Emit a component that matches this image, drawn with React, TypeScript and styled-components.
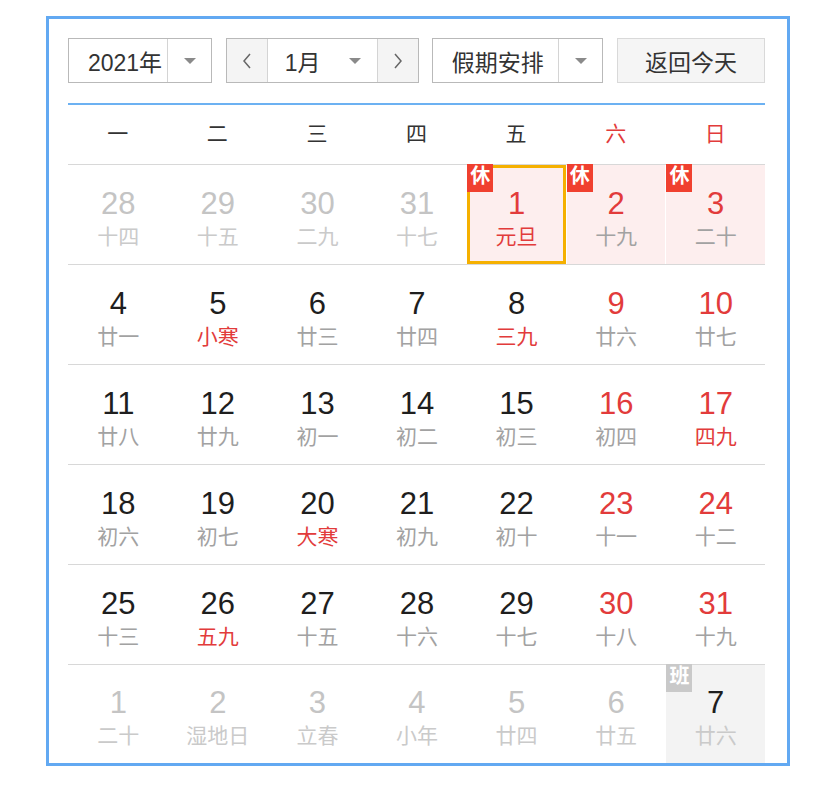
import styled, { createGlobalStyle } from 'styled-components';

const GlobalStyle = createGlobalStyle`
    body {
        margin: 0;
        background: #fff;
        font-family: "Liberation Sans", "Noto Sans CJK SC", sans-serif;
    }
`

const RED = '#e23b3b'

const Frame = styled.div`
    margin: 16px 0 0 46px;
    width: 744px;
    height: 750px;
    box-sizing: border-box;
    border: 3px solid #62a9f2;
    padding: 19px 22px 0 19px;
    display: flex;
    flex-direction: column;
`

const Toolbar = styled.div`
    display: flex;
    justify-content: space-between;
    height: 45px;
    padding-bottom: 20px;
    border-bottom: 2px solid #6cb1f2;
`

const Select = styled.div<{ $width: number }>`
    display: flex;
    width: ${(p) => p.$width}px;
    height: 45px;
    box-sizing: border-box;
    border: 1px solid #b9b9b9;
    background: #fff;
    color: #333;
    font-size: 23px;
`

const SelectText = styled.div<{ $pad?: number }>`
    flex: 1;
    display: flex;
    align-items: center;
    justify-content: center;
    padding-left: ${(p) => p.$pad ?? 4}px;
`

const ArrowBox = styled.div<{ $divider?: boolean }>`
    width: 43px;
    display: flex;
    align-items: center;
    justify-content: center;
    border-left: ${(p) => (p.$divider ? '1px solid #d4d4d4' : 'none')};
`

const Triangle = styled.span`
    width: 0;
    height: 0;
    border-left: 6px solid transparent;
    border-right: 6px solid transparent;
    border-top: 6px solid #8a8a8a;
`

const NavButton = styled.div<{ $side: 'left' | 'right' }>`
    width: 40px;
    display: flex;
    align-items: center;
    justify-content: center;
    background: #f4f4f4;
    border-${(p) => (p.$side === 'left' ? 'right' : 'left')}: 1px solid #d4d4d4;
`

const MonthText = styled.div`
    flex: 1;
    display: flex;
    align-items: center;
    padding-left: 17px;
`

const TodayButton = styled.div`
    width: 148px;
    height: 45px;
    box-sizing: border-box;
    border: 1px solid #d9d9d9;
    background: #f5f5f5;
    color: #333;
    font-size: 23px;
    display: flex;
    align-items: center;
    justify-content: center;
`

const WeekHeader = styled.div`
    display: grid;
    grid-template-columns: repeat(7, 1fr);
    height: 59px;
    border-bottom: 1px solid #d8d8d8;
`

const WeekDay = styled.div<{ $red?: boolean }>`
    display: flex;
    align-items: center;
    justify-content: center;
    padding-bottom: 5px;
    font-size: 21px;
    color: ${(p) => (p.$red ? RED : '#333')};
`

const Week = styled.div<{ $last?: boolean }>`
    display: grid;
    grid-template-columns: repeat(7, 1fr);
    height: ${(p) => (p.$last ? 98 : 99)}px;
    border-bottom: ${(p) => (p.$last ? 'none' : '1px solid #d8d8d8')};
`

const Cell = styled.div<{ $bg?: string; $selected?: boolean }>`
    position: relative;
    display: flex;
    flex-direction: column;
    align-items: center;
    justify-content: center;
    padding-top: 8px;
    box-sizing: border-box;
    border-left: 1px solid #fff;
    background: ${(p) => p.$bg || 'transparent'};
    box-shadow: ${(p) => (p.$selected ? 'inset 0 0 0 3px #f5b000' : 'none')};
`

const DayNum = styled.div<{ $color: string }>`
    font-size: 31px;
    line-height: 36px;
    color: ${(p) => p.$color};
`

const Lunar = styled.div<{ $color: string }>`
    font-size: 21px;
    line-height: 30px;
    color: ${(p) => p.$color};
`

const Badge = styled.div<{ $work?: boolean }>`
    position: absolute;
    top: -1px;
    left: 0;
    width: 26px;
    height: 28px;
    background: ${(p) => (p.$work ? '#c9c9c9' : '#f0402f')};
    color: #fff;
    font-size: 20px;
    font-weight: bold;
    line-height: 25px;
    text-align: center;
`

type Day = {
    n: number
    l: string
    other?: boolean
    weekend?: boolean
    redLunar?: boolean
    rest?: boolean
    work?: boolean
    selected?: boolean
}

const rows: Day[][] = [
    [
        { n: 28, l: '十四', other: true },
        { n: 29, l: '十五', other: true },
        { n: 30, l: '二九', other: true },
        { n: 31, l: '十七', other: true },
        { n: 1, l: '元旦', redLunar: true, weekend: true, rest: true, selected: true },
        { n: 2, l: '十九', weekend: true, rest: true },
        { n: 3, l: '二十', weekend: true, rest: true },
    ],
    [
        { n: 4, l: '廿一' },
        { n: 5, l: '小寒', redLunar: true },
        { n: 6, l: '廿三' },
        { n: 7, l: '廿四' },
        { n: 8, l: '三九', redLunar: true },
        { n: 9, l: '廿六', weekend: true },
        { n: 10, l: '廿七', weekend: true },
    ],
    [
        { n: 11, l: '廿八' },
        { n: 12, l: '廿九' },
        { n: 13, l: '初一' },
        { n: 14, l: '初二' },
        { n: 15, l: '初三' },
        { n: 16, l: '初四', weekend: true },
        { n: 17, l: '四九', weekend: true, redLunar: true },
    ],
    [
        { n: 18, l: '初六' },
        { n: 19, l: '初七' },
        { n: 20, l: '大寒', redLunar: true },
        { n: 21, l: '初九' },
        { n: 22, l: '初十' },
        { n: 23, l: '十一', weekend: true },
        { n: 24, l: '十二', weekend: true },
    ],
    [
        { n: 25, l: '十三' },
        { n: 26, l: '五九', redLunar: true },
        { n: 27, l: '十五' },
        { n: 28, l: '十六' },
        { n: 29, l: '十七' },
        { n: 30, l: '十八', weekend: true },
        { n: 31, l: '十九', weekend: true },
    ],
    [
        { n: 1, l: '二十', other: true },
        { n: 2, l: '湿地日', other: true },
        { n: 3, l: '立春', other: true },
        { n: 4, l: '小年', other: true },
        { n: 5, l: '廿四', other: true },
        { n: 6, l: '廿五', other: true },
        { n: 7, l: '廿六', work: true },
    ],
]

const weekDays = ['一', '二', '三', '四', '五', '六', '日']

const numColor = (d: Day) => {
    if (d.other) return '#c4c4c4'
    if (d.weekend) return RED
    return '#1e1e1e'
}

const lunarColor = (d: Day) => {
    if (d.other || d.work) return '#cacaca'
    if (d.redLunar) return RED
    return '#a2a2a2'
}

const cellBg = (d: Day) => {
    if (d.rest) return '#fdeeee'
    if (d.work) return '#f3f3f3'
    return undefined
}

const Chevron = ({ dir }: { dir: 'left' | 'right' }) => (
    <svg width="10" height="16" viewBox="0 0 10 16">
        <path
            d={dir === 'left' ? 'M8 1 L2 8 L8 15' : 'M2 1 L8 8 L2 15'}
            fill="none"
            stroke="#666"
            strokeWidth="1.5"
        />
    </svg>
)

const App = () => {
    return (
        <>
            <GlobalStyle />
            <Frame>
                <Toolbar>
                    <Select $width={144}>
                        <SelectText $pad={14}>2021年</SelectText>
                        <ArrowBox $divider><Triangle /></ArrowBox>
                    </Select>
                    <Select $width={193}>
                        <NavButton $side="left"><Chevron dir="left" /></NavButton>
                        <MonthText>1月</MonthText>
                        <ArrowBox><Triangle /></ArrowBox>
                        <NavButton $side="right"><Chevron dir="right" /></NavButton>
                    </Select>
                    <Select $width={171}>
                        <SelectText>假期安排</SelectText>
                        <ArrowBox $divider><Triangle /></ArrowBox>
                    </Select>
                    <TodayButton>返回今天</TodayButton>
                </Toolbar>
                <WeekHeader>
                    {weekDays.map((w, i) => (
                        <WeekDay key={w} $red={i >= 5}>{w}</WeekDay>
                    ))}
                </WeekHeader>
                {rows.map((row, ri) => (
                    <Week key={ri} $last={ri === rows.length - 1}>
                        {row.map((d, ci) => (
                            <Cell key={ci} $bg={cellBg(d)} $selected={d.selected}>
                                {d.rest && <Badge>休</Badge>}
                                {d.work && <Badge $work>班</Badge>}
                                <DayNum $color={numColor(d)}>{d.n}</DayNum>
                                <Lunar $color={lunarColor(d)}>{d.l}</Lunar>
                            </Cell>
                        ))}
                    </Week>
                ))}
            </Frame>
        </>
    );
}

export default App;
